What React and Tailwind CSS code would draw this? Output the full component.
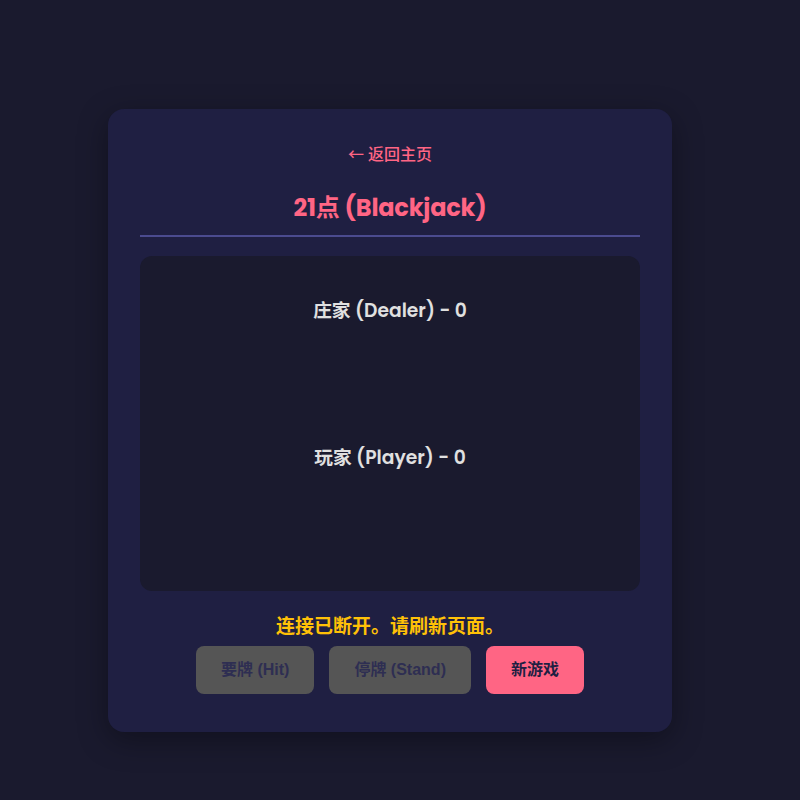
import React from 'react';

const HEAD = "font-['Poppins','Inter','Noto_Sans_CJK_SC',sans-serif]";

export default function App() {
  return (
    <div className="min-h-screen w-full bg-[#1a1a2e] flex justify-center items-start pt-[109px] pr-[20px] font-['Liberation_Sans','Noto_Sans_CJK_SC',sans-serif]">
      <div className="w-[564px] bg-[#1f1f42] rounded-2xl px-8 pt-[33px] pb-[38px] shadow-[0_8px_30px_rgba(0,0,0,0.35)] flex flex-col items-center">
        {/* Back link */}
        <a href="#" className={`${HEAD} text-[16px] leading-[22px] font-medium text-[#ff6584]`}>
          <span className="font-['Noto_Sans_CJK_SC',sans-serif]">←</span> 返回主页
        </a>

        {/* Title */}
        <h1 className={`${HEAD} mt-[26px] text-[24px] leading-[32px] font-bold text-[#ff6584] tracking-[-0.2px]`}>
          21点 (Blackjack)
        </h1>
        <div className="w-full h-[2px] bg-[#4b4b8f] mt-[11px]" />

        {/* Board */}
        <div className="w-full mt-[19px] h-[335px] bg-[#1a1a2e] rounded-xl flex flex-col items-center pt-[43px]">
          <h2 className={`${HEAD} text-[18.7px] leading-[24px] font-semibold text-[#e0e0e0]`}>
            庄家 (Dealer) - 0
          </h2>
          <h2 className={`${HEAD} mt-[123px] text-[18.7px] leading-[24px] font-semibold text-[#e0e0e0]`}>
            玩家 (Player) - 0
          </h2>
        </div>

        {/* Status */}
        <p className={`${HEAD} mt-[23px] text-[19px] leading-[26px] font-bold text-[#ffc107]`}>
          连接已断开。请刷新页面。
        </p>

        {/* Buttons */}
        <div className="mt-[6px] flex gap-[15px]">
          <button disabled className="h-[48px] px-[25px] rounded-lg bg-[#555555] text-[#2e2e52] text-[16px] font-bold">
            要牌 (Hit)
          </button>
          <button disabled className="h-[48px] px-[25px] rounded-lg bg-[#555555] text-[#2e2e52] text-[16px] font-bold">
            停牌 (Stand)
          </button>
          <button className="h-[48px] px-[25px] rounded-lg bg-[#ff6584] text-[#1f1f42] text-[16px] font-bold">
            新游戏
          </button>
        </div>
      </div>
    </div>
  );
}
